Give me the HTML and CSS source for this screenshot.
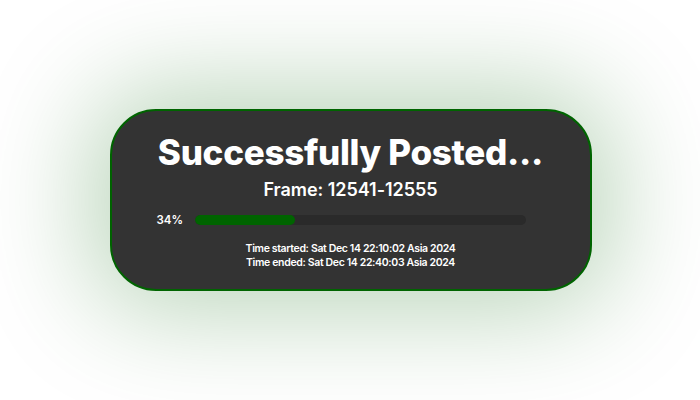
FILE: index.html
```html
<!DOCTYPE html>
<html>
<head>
<meta charset="utf-8">
<link rel="stylesheet" href="styles.css">
</head>
<body>
<div class="stage">
  <div class="card">
    <h1 class="title">Successfully Posted...</h1>
    <div class="frame">Frame: 12541-12555</div>
    <div class="progress">
      <span class="pct">34%</span>
      <div class="track"><div class="fill" style="width:30.3%"></div></div>
    </div>
    <div class="times">
      <div>Time started: Sat Dec 14 22:10:02 Asia 2024</div>
      <div>Time ended: Sat Dec 14 22:40:03 Asia 2024</div>
    </div>
  </div>
</div>
</body>
</html>
```

FILE: styles.css
```css
html, body {
  margin: 0;
  padding: 0;
  background: #ffffff;
}
.stage {
  width: 700px;
  height: 400px;
  display: flex;
  align-items: center;
  justify-content: center;
  font-family: Inter, "Liberation Sans", sans-serif;
  color: #ffffff;
}
.card {
  box-sizing: border-box;
  width: 482px;
  height: 182px;
  margin-left: 1px;
  background: #333333;
  border: 2px solid #006400;
  border-radius: 46px;
  box-shadow: 0 0 110px 20px rgba(0, 100, 0, 0.28);
  padding: 20px 0 0;
  display: flex;
  flex-direction: column;
  align-items: center;
}
.title {
  margin: 0;
  font-size: 35px;
  line-height: 42px;
  font-weight: 800;
  letter-spacing: -0.3px;
  font-feature-settings: "calt" 0;
}
.frame {
  margin-top: 6px;
  font-size: 18px;
  line-height: 22px;
  font-weight: 600;
  letter-spacing: -0.05px;
}
.progress {
  margin-top: 12px;
  align-self: stretch;
  padding: 0 64px 0 45px;
  display: flex;
  align-items: center;
  gap: 13px;
  height: 14px;
}
.pct {
  font-size: 11.5px;
  font-weight: 600;
  width: 25px;
}
.track {
  flex: 1;
  height: 10px;
  border-radius: 5px;
  background: #2a2a2a;
  overflow: hidden;
}
.fill {
  height: 100%;
  border-radius: 5px;
  background: #006400;
}
.times {
  margin-top: 15px;
  font-size: 10.5px;
  line-height: 14px;
  font-weight: 600;
  letter-spacing: -0.35px;
  text-align: center;
}
```
